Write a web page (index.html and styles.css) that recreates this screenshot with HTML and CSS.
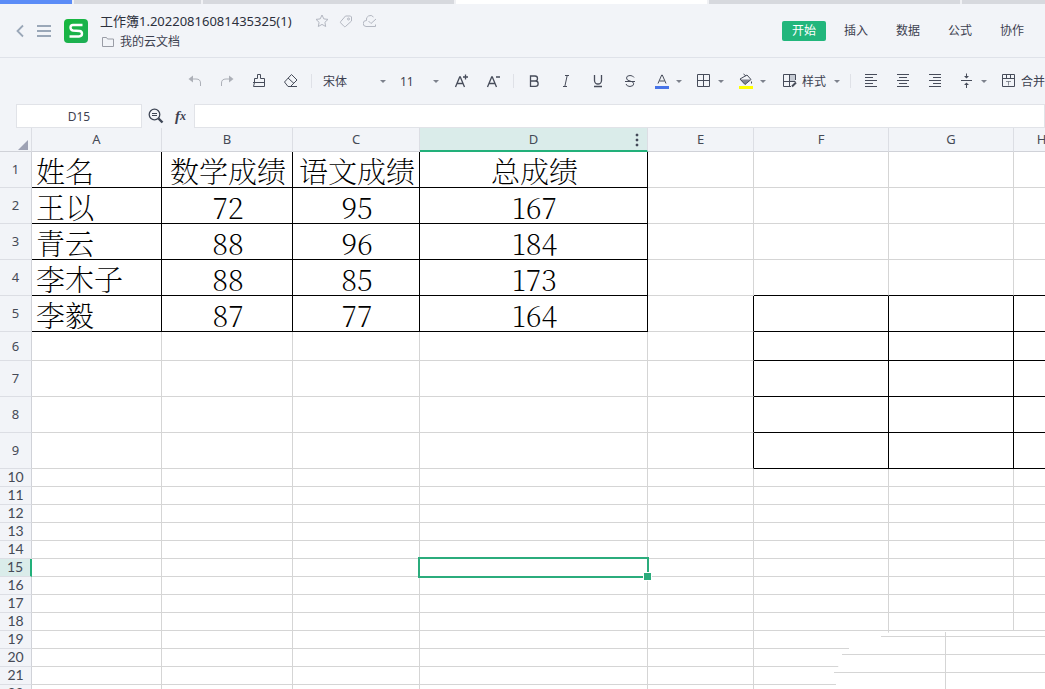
FILE: index.html
```
<!DOCTYPE html>
<html lang="zh-CN">
<head>
<meta charset="utf-8">
<title>工作簿1.20220816081435325(1)</title>
<link rel="stylesheet" href="styles.css">
</head>
<body>
<div class="tabs"><span class="tab tab-blue"></span><span class="tab tab-short"></span><span class="tab"></span><span class="tab tab-current"></span><span class="tab"></span><span class="tab tab-rest"></span></div>

<header class="header">
  <button class="plain back" aria-label="返回"><svg width="8" height="14" viewBox="0 0 8 14"><path d="M7 1.500 1.500 7 7 12.500" fill="none" stroke="#9aa7b8" stroke-width="1.800"/></svg></button>
  <button class="plain menu" aria-label="菜单"><svg width="14" height="14" viewBox="0 0 14 14"><path d="M0 2h14M0 7h14M0 12h14" stroke="#9aa7b8" stroke-width="1.800"/></svg></button>
  <svg class="logo" width="24" height="24" viewBox="0 0 24 24"><defs><linearGradient id="g" x1="0" y1="0" x2="1" y2="1"><stop offset="0" stop-color="#16b83c"/><stop offset="1" stop-color="#1fae58"/></linearGradient></defs><rect width="24" height="24" rx="4" fill="url(#g)"/><path d="M18.500 6H9Q6.500 6 6.500 8.500T9 11.500L15.500 12Q18 12.200 18 14.800T15 17.500H5.500" fill="none" stroke="#fff" stroke-width="2.400"/></svg>
  <div class="titles">
    <div class="title-row">
      <h1>工作簿1.20220816081435325(1)</h1>
      <button class="plain" aria-label="收藏"><svg width="14" height="14" viewBox="0 0 14 14"><path d="m7 1 1.800 3.900 4.200.5-3.100 2.900.8 4.200L7 10.400 3.300 12.500l.8-4.200L1 5.400l4.200-.5z"/></svg></button>
      <button class="plain" aria-label="标签"><svg width="14" height="14" viewBox="0 0 14 14"><path d="M6.500 2h5l1 1v4l-6 5.500q-.7.500-1.300 0l-3.500-3.600q-.5-.7 0-1.300z"/><circle cx="9.500" cy="5" r="1"/></svg></button>
      <button class="plain" aria-label="云同步"><svg width="14" height="14" viewBox="0 0 14 14"><path d="M10.500 3A4 4 0 0 0 3.500 6.500 2.800 2.800 0 0 0 3 12.500H12.500V10.500M5.500 7l2.500 2.500L13 5"/></svg></button>
    </div>
    <a class="folder" href="#"><svg width="12" height="12" viewBox="0 0 12 12"><path d="M.5 1.500h4l1 1.500h6v7.500H.5z" fill="none" stroke="#9a9da6"/></svg>我的云文档</a>
  </div>
  <nav class="nav"><button class="active">开始</button><button>插入</button><button>数据</button><button>公式</button><button>协作</button></nav>
</header>

<div class="toolbar">
  <button class="tool faded" aria-label="撤销"><svg viewBox="0 0 16 16"><path d="M4 6h5q4.500 0 4.500 4v3"/><path class="solid" d="M1.500 6 6 2.500v7z"/></svg></button>
  <button class="tool faded" aria-label="重做"><svg viewBox="0 0 16 16"><path d="M12 6H7q-4.500 0-4.500 4v3"/><path class="solid" d="M14.500 6 10 2.500v7z"/></svg></button>
  <button class="tool" aria-label="格式刷"><svg viewBox="0 0 16 16"><path d="M3.500 9.500V5.500h3V1.500h3v4h4v4M2 9.500h12M3.500 9.500l-1 4h11v-4"/></svg></button>
  <button class="tool" aria-label="清除"><svg viewBox="0 0 16 16"><path d="m8.500 1.500 5.500 5.500-6.500 6.500H5L1.500 9zM5 5l6 5.500M7 13.500h7"/></svg></button>
  <span class="sep"></span>
  <select class="family" aria-label="字体"><option>宋体</option></select>
  <select class="size" aria-label="字号"><option>11</option></select>
  <button class="tool" aria-label="增大字号"><svg viewBox="0 0 16 16"><path class="bold" d="m2.500 14 4.200-10h.6L11.500 14M4 10.500h6M10 4h5M12.500 1.500v5"/></svg></button>
  <button class="tool" aria-label="减小字号"><svg viewBox="0 0 16 16"><path class="bold" d="m2.500 14 4.200-10h.6L11.500 14M4 10.500h6M11 4h4"/></svg></button>
  <span class="sep"></span>
  <button class="tool" aria-label="加粗"><svg viewBox="0 0 16 16"><path class="bold" d="M4.500 3H9a2.400 2.400 0 0 1 0 5H4.500h5a2.600 2.600 0 0 1 0 5.300H4.500z"/></svg></button>
  <button class="tool" aria-label="斜体"><svg viewBox="0 0 16 16"><path d="M7 2.500h4M9.200 2.500 6.800 13.500M5 13.500h4"/></svg></button>
  <button class="tool" aria-label="下划线"><svg viewBox="0 0 16 16"><path class="bold" d="M4.500 2v5.500a3.500 3.500 0 0 0 7 0V2M4 13.500h8"/></svg></button>
  <button class="tool" aria-label="删除线"><svg viewBox="0 0 16 16"><path d="M12 4.500Q11 2.500 8 2.500 4.500 2.500 4.500 5T8 8t3.700 2.800T8 13.500q-3.200 0-4-2.500M3 8.500h10"/></svg></button>
  <button class="tool drop" aria-label="字体颜色"><svg viewBox="0 0 16 16"><path d="M4 10.500 7.700 2h.6l3.700 8.500M5.500 8h5"/><path class="ink" d="M1 13h14v3H1z"/></svg></button>
  <button class="tool drop" aria-label="边框"><svg viewBox="0 0 16 16"><path d="M1.500 1.500h12v12h-12zM7.500 1.500v12M1.500 7.500h12"/></svg></button>
  <button class="tool drop" aria-label="填充颜色"><svg viewBox="0 0 16 16"><path d="M2 6 9 2l4 4.500-6 5z"/><path class="solid" d="M2 6.500h10.500L7 11.500z" opacity=".65"/><path d="m5.500 1 2.500 2M13.500 8.500v2"/><path class="marker" d="M1 13h14v3H1z"/></svg></button>
  <button class="tool drop labelled"><svg viewBox="0 0 16 16"><path d="M13.500 7V1.500h-12v12H9M7.500 1.500v12M1.500 8.500h12"/><path class="shade" d="M8 2h5v6H8z"/><path class="brush" d="m10 13.500 4-4"/></svg>样式</button>
  <span class="sep"></span>
  <button class="tool" aria-label="左对齐"><svg viewBox="0 0 16 16"><path d="M2 1.500h12M2 4.500h8M2 7.500h12M2 10.500h8M2 13.500h12"/></svg></button>
  <button class="tool" aria-label="居中"><svg viewBox="0 0 16 16"><path d="M2 1.500h12M4 4.500h8M2 7.500h12M4 10.500h8M2 13.500h12"/></svg></button>
  <button class="tool" aria-label="右对齐"><svg viewBox="0 0 16 16"><path d="M2 1.500h12M6 4.500h8M2 7.500h12M6 10.500h8M2 13.500h12"/></svg></button>
  <button class="tool drop" aria-label="垂直对齐"><svg viewBox="0 0 16 16"><path d="M2 7.500h11M7.500 .5V4M7.500 11v4"/><path class="solid" d="M5 3h5L7.500 5.500zM5 12h5L7.500 9.500z"/></svg></button>
  <button class="tool labelled"><svg viewBox="0 0 16 16"><path d="M1.500 1.500h12v12h-12zM1.500 5.500h12M5.500 1.500v4M9.500 1.500v4"/><path d="M5 8.500h5M7.500 8.500v4" opacity=".6"/></svg>合并</button>
</div>

<div class="formula">
  <input class="name-box" aria-label="名称框" value="D15">
  <button class="plain lookup" aria-label="查找"><svg width="16" height="16" viewBox="0 0 16 16" fill="none" stroke="#3f4655"><circle cx="6.500" cy="6.500" r="5.300" stroke-width="1.300"/><path d="M4 5.500h5M4 7.500h5"/><path d="m10.500 10.500 4 4" stroke-width="2.400"/></svg></button>
  <button class="plain fx">f<small>x</small></button>
  <input class="formula-box" aria-label="编辑栏">
</div>

<main class="sheet">
<table>
<colgroup><col class="c-n"><col class="c-a"><col class="c-b"><col class="c-c"><col class="c-d"><col class="c-e"><col class="c-f"><col class="c-g"><col class="c-h"></colgroup>
<thead><tr><th class="corner"><svg width="10" height="10" viewBox="0 0 10 10"><path d="M10 0v10H0z" fill="#9ea2b4"/></svg></th><th>A</th><th>B</th><th>C</th><th class="picked">D<svg class="dots" width="4" height="14" viewBox="0 0 4 14"><path d="M1 1h2v2H1zM1 6h2v2H1zM1 11h2v2H1z" fill="#444b59" stroke="#444b59" stroke-width=".5"/></svg></th><th>E</th><th>F</th><th>G</th><th>H</th></tr></thead>
<tbody class="scores">
<tr><th>1</th><td>姓名</td><td>数学成绩</td><td>语文成绩</td><td>总成绩</td><td></td><td></td><td></td><td></td></tr>
<tr><th>2</th><td>王以</td><td>72</td><td>95</td><td>167</td><td></td><td></td><td></td><td></td></tr>
<tr><th>3</th><td>青云</td><td>88</td><td>96</td><td>184</td><td></td><td></td><td></td><td></td></tr>
<tr class="before-box"><th>4</th><td>李木子</td><td>88</td><td>85</td><td>173</td><td></td><td></td><td></td><td></td></tr>
<tr class="boxed"><th>5</th><td>李毅</td><td>87</td><td>77</td><td>164</td><td></td><td></td><td></td><td></td></tr>
</tbody>
<tbody class="tall">
<tr class="boxed mid"><th>6</th><td></td><td></td><td></td><td></td><td></td><td></td><td></td><td></td></tr>
<tr class="boxed"><th>7</th><td></td><td></td><td></td><td></td><td></td><td></td><td></td><td></td></tr>
<tr class="boxed"><th>8</th><td></td><td></td><td></td><td></td><td></td><td></td><td></td><td></td></tr>
<tr class="boxed"><th>9</th><td></td><td></td><td></td><td></td><td></td><td></td><td></td><td></td></tr>
</tbody>
<tbody class="short">
<tr><th>10</th><td></td><td></td><td></td><td></td><td></td><td></td><td></td><td></td></tr>
<tr><th>11</th><td></td><td></td><td></td><td></td><td></td><td></td><td></td><td></td></tr>
<tr><th>12</th><td></td><td></td><td></td><td></td><td></td><td></td><td></td><td></td></tr>
<tr><th>13</th><td></td><td></td><td></td><td></td><td></td><td></td><td></td><td></td></tr>
<tr><th>14</th><td></td><td></td><td></td><td></td><td></td><td></td><td></td><td></td></tr>
<tr><th class="picked-row">15</th><td></td><td></td><td></td><td class="current"><span class="cursor"></span></td><td></td><td></td><td></td><td></td></tr>
<tr><th>16</th><td></td><td></td><td></td><td></td><td></td><td></td><td></td><td></td></tr>
<tr><th>17</th><td></td><td></td><td></td><td></td><td></td><td></td><td></td><td></td></tr>
<tr><th>18</th><td></td><td></td><td></td><td></td><td></td><td></td><td></td><td></td></tr>
<tr><th>19</th><td></td><td></td><td></td><td></td><td></td><td></td><td></td><td></td></tr>
<tr><th>20</th><td></td><td></td><td></td><td></td><td></td><td></td><td></td><td></td></tr>
<tr><th>21</th><td></td><td></td><td></td><td></td><td></td><td></td><td></td><td></td></tr>
<tr><th>22</th><td></td><td></td><td></td><td></td><td></td><td></td><td></td><td></td></tr>
</tbody>
</table>
<svg class="patch" width="211" height="58" viewBox="0 0 211 58"><path d="M50 3 60 0H211V58H2V40L8 28 15 22V12L40 4z" fill="#fff"/><path d="M47 5.500H211M8 23.500H211M0 41.500H211M111.500 1V58" stroke="#d5d5d5"/></svg>
</main>
</body>
</html>
```
FILE: styles.css
```
* { box-sizing: border-box; }
body {
  margin: 0;
  height: 100vh;
  display: flex;
  flex-direction: column;
  overflow: hidden;
  background: #f2f4f8;
  color: #3d4150;
  font-family: "Noto Sans", "Noto Sans CJK SC", sans-serif;
  font-size: 12px;
}
button, input, select { font: inherit; color: inherit; }
button { border: 0; padding: 0; background: none; }
svg { display: block; flex: none; }

.tabs { display: flex; gap: 2px; height: 4px; background: #f0f1f4; }
.tab { width: 251px; background: #d7d9de; }
.tab-blue { width: 72px; background: #5b8cf7; }
.tab-short { width: 127px; }
.tab-current { background: #fff; }
.tab-rest { flex: 1; }

.header {
  display: flex;
  align-items: center;
  height: 54px;
  padding: 1px 11px 0 16px;
  border-bottom: 1px solid #dfe2e9;
}
.plain { display: flex; align-items: center; }
.menu { margin-left: 13px; }
.logo { margin: 0 12px 0 13px; }
.titles { display: flex; flex-direction: column; gap: 2px; }
.title-row { display: flex; align-items: center; gap: 10px; }
.title-row svg { fill: none; stroke: #b3b7c1; }
h1 { margin: 0 13px 0 0; font-size: 13px; line-height: 20px; font-weight: 400; color: #2c303c; }
.folder { display: flex; align-items: center; gap: 6px; padding-left: 2px; line-height: 18px; color: inherit; text-decoration: none; }
.nav { display: flex; gap: 8px; margin-left: auto; }
.nav button { width: 44px; height: 20px; line-height: 20px; border-radius: 2px; }
.nav .active { background: #22b67c; color: #fff; }

.toolbar { display: flex; align-items: center; height: 46px; padding-left: 179px; }
.tool { display: flex; flex: none; align-items: center; width: 32px; height: 32px; padding-left: 8px; }
.tool svg { width: 16px; height: 16px; fill: none; stroke: #474c5a; overflow: visible; }
.tool .solid { fill: #474c5a; stroke: none; }
.tool .bold { stroke-width: 1.3; }
.tool .ink { fill: #4874e8; stroke: none; }
.tool .marker { fill: #ff0; stroke: none; }
.tool .shade { fill: #a9afbd; stroke: none; opacity: .6; }
.tool .brush { stroke-width: 2; }
.faded svg { opacity: .4; }
.drop { width: 42px; }
.drop::after { content: ""; margin-left: 6px; border: 3px solid transparent; border-top-color: #7d818c; border-bottom: 0; }
.labelled { width: 74px; padding-left: 10px; white-space: nowrap; }
.labelled svg { margin-right: 4px; }
.labelled::after { margin-left: 8px; }
.labelled:last-child { padding-left: 8px; }
.sep { flex: none; width: 1px; height: 14px; margin: 0 4px; background: #dfe1e7; }
.toolbar select {
  appearance: none;
  flex: none;
  height: 24px;
  border: 0;
  padding: 0 16px 0 7px;
  background: url("data:image/svg+xml,%3Csvg xmlns='http://www.w3.org/2000/svg' width='6' height='3'%3E%3Cpath d='M0 0h6L3 3z' fill='%237d818c'/%3E%3C/svg%3E") no-repeat right 6px center;
}
.family { width: 76px; }
.toolbar .size { width: 53px; padding-left: 8px; }

.formula { display: flex; align-items: stretch; height: 24px; }
.formula input { border: 1px solid #e1e3e8; background: #fff; padding: 0; }
.name-box { flex: none; width: 126px; margin-left: 16px; text-align: center; }
.lookup { margin-left: 6px; }
.fx { margin: 0 7px 0 11px; width: 12px; font: italic bold 15px/16px "Liberation Serif", serif; }
.fx small { font-size: 12px; }
.formula-box { flex: 1; min-width: 0; }

.sheet { position: relative; flex: 1; min-height: 0; overflow: hidden; background: #fff; }
table { table-layout: fixed; width: 1070px; border-spacing: 0; }
.c-n { width: 32px; }
.c-a { width: 130px; }
.c-b { width: 131px; }
.c-c { width: 127px; }
.c-d { width: 228px; }
.c-e { width: 106px; }
.c-f { width: 135px; }
.c-g { width: 125px; }
.c-h { width: 56px; }
th, td { padding: 0; border: 0 solid #d5d5d5; border-width: 0 1px 1px 0; }
th { background: #f2f4f8; border-color: #dcdee4; font-size: 13px; font-weight: 400; line-height: 17px; color: #454a56; }
tbody th { border-right-color: #d0d2d8; }
thead th { height: 24px; border-bottom-color: #d0d2d8; }
.corner svg { margin: 10px 0 0 18px; }
thead .picked { position: relative; background: #daecea; border-bottom: 2px solid #22b07a; }
.dots { position: absolute; right: 8px; top: 5px; }
.scores tr, .tall tr { height: 36px; }
.tall .mid { height: 29px; }
.short tr { height: 18px; }
.short th { vertical-align: top; font: 14px/15px Lato, sans-serif; }
.scores td {
  padding: 2px 0 0 2px;
  font: 200 29px/30px "Noto Serif CJK SC", "Liberation Serif", "Noto Sans CJK SC", serif;
  color: #000;
  text-align: center;
  white-space: nowrap;
}
.scores td:nth-child(2) { padding-left: 4px; text-align: left; }
.scores td:nth-child(-n+5) { border-color: #000; }
.before-box td:nth-child(n+7) { border-bottom-color: #000; }
.boxed td:nth-child(6) { border-right-color: #000; }
.boxed td:nth-child(n+7) { border-color: #000; }
.short .picked-row { background: #daecea; border-right: 2px solid #22b07a; }
.current { position: relative; }
.cursor { position: absolute; inset: -2px; border: 2px solid #2bac7c; }
.cursor::after {
  content: "";
  position: absolute;
  right: -5px;
  bottom: -5px;
  width: 7px;
  height: 7px;
  border: 1px solid #fff;
  background: #2bac7c;
}
.patch { position: absolute; right: 0; bottom: 0; }
```
